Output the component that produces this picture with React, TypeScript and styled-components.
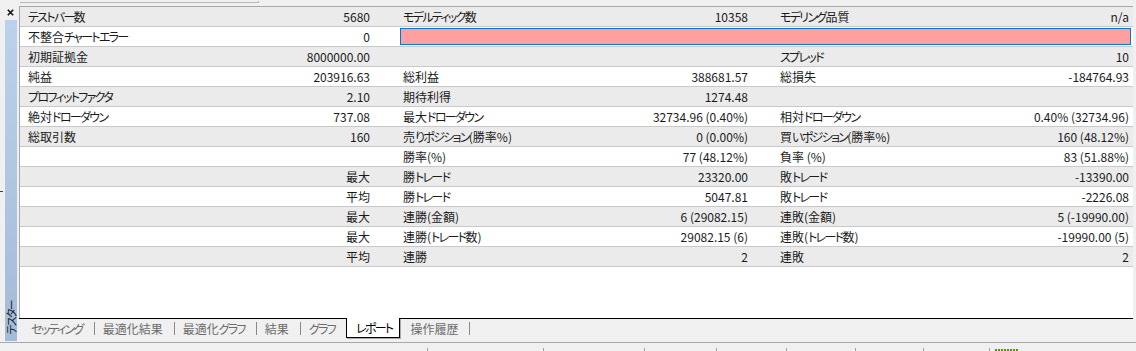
import { Fragment } from 'react';
import styled, { createGlobalStyle, css } from 'styled-components';

const GlobalStyle = createGlobalStyle`
  html, body {
    margin: 0;
    padding: 0;
    background: #f0f0f0;
  }
  body {
    font-family: "Noto Sans CJK JP", "Noto Sans", sans-serif;
    font-size: 12px;
    color: #1a1a1a;
  }
`;

const Window = styled.div`
  width: 1136px;
  height: 351px;
  display: flex;
  flex-direction: column;
  overflow: hidden;
  background: #f0f0f0;
  font-feature-settings: "palt";
`;

// kana in the reference font are much narrower than in Noto CJK
const Kana = styled.span`
  letter-spacing: -1.7px;
`;

const kanaRun = /([\u3040-\u30ff]+)/;

const Jp = ({ text }: { text: string }) => (
  <>
    {text.split(kanaRun).map((part, i) => (i % 2 ? <Kana key={i}>{part}</Kana> : part))}
  </>
);

const TopStrip = styled.div`
  height: 6px;
  display: flex;
  padding-left: 20px;
`;

const TopFragment = styled.div`
  width: 238px;
  height: 1px;
  margin-top: 1px;
  border-bottom: 1px solid #b8b8b8;
  border-right: 1px solid #b8b8b8;
`;

const Main = styled.div`
  height: 336px;
  display: flex;
`;

const Dock = styled.div`
  width: 19px;
  display: flex;
  flex-direction: column;
  align-items: flex-start;
  position: relative;
`;

const CloseButton = styled.div`
  margin: 3px 0 0 7px;
  width: 7px;
  height: 7px;
  display: flex;
`;

const DockBar = styled.div`
  margin: 4px 0 1px 5px;
  width: 12px;
  flex: 1;
  background: linear-gradient(#bcd2ea, #a2bbd8);
  display: flex;
  flex-direction: column;
  justify-content: flex-end;
  align-items: center;
`;

const DockTitle = styled.div`
  writing-mode: vertical-rl;
  text-orientation: sideways;
  transform: rotate(180deg);
  font-size: 11px;
  line-height: 12px;
  color: #1a1a1a;
  margin-bottom: 6px;
`;

const EdgeMark = styled.div`
  position: absolute;
  left: 0;
  top: 185px;
  width: 3px;
  height: 1px;
  background: #2040a0;
`;

const Panel = styled.div`
  flex: 1;
  margin-right: 3px;
  display: flex;
  flex-direction: column;
`;

const ReportArea = styled.div`
  flex: 1;
  background: #fff;
  border-top: 1px solid #a8a8a8;
  border-left: 1px solid #a8a8a8;
`;

const Row = styled.div<{ $alt: boolean }>`
  display: grid;
  grid-template-columns: 180px 198px 180px 197px 180px 178px;
  height: 19px;
  line-height: 19px;
  border-bottom: 1px solid #c9c9c9;
  background: ${p => (p.$alt ? '#ebebeb' : '#ffffff')};
`;

const Label = styled.div<{ $first?: boolean }>`
  padding-left: ${p => (p.$first ? 8 : 5)}px;
  white-space: nowrap;
  overflow: hidden;
`;

const Value = styled.div<{ $pad: number }>`
  padding-right: ${p => p.$pad}px;
  text-align: right;
  white-space: nowrap;
  overflow: hidden;
`;

const ErrorField = styled.div`
  grid-column: 3 / 7;
  margin: 1px 2px 1px 2px;
  height: 15px;
  background: #ffa0a0;
  border: 1px solid #0078d7;
`;

const TabBar = styled.div`
  height: 23px;
  border-top: 1px solid #000;
  display: flex;
  align-items: flex-start;
  padding-left: 4px;
`;

const Tab = styled.div<{ $active?: boolean; $afterActive?: boolean }>`
  height: 19px;
  line-height: 19px;
  padding: 0 11px 0 ${p => (p.$afterActive ? 10 : 8)}px;
  color: #6b6b6b;
  white-space: nowrap;
  ${p =>
    p.$active &&
    css`
      margin-top: -1px;
      padding: 0 7px 0 9px;
      background: #fff;
      color: #000;
      border: 1px solid #000;
      border-top: none;
      box-shadow: 1px 1px 0 #a8a8a8;
    `}
`;

const TabSep = styled.div`
  width: 1px;
  height: 13px;
  margin-top: 3px;
  background: #8a8a8a;
`;

const StatusBar = styled.div`
  height: 8px;
  border-top: 1px solid #a8a8a8;
  display: flex;
`;

const StatusCell = styled.div<{ $w?: number; $sep?: boolean }>`
  ${p => (p.$w ? `width: ${p.$w}px;` : 'flex: 1;')}
  position: relative;
  ${p =>
    p.$sep &&
    css`
      &::before {
        content: '';
        position: absolute;
        left: 0;
        top: 5px;
        width: 1px;
        height: 4px;
        background: #a0a0a0;
      }
    `}
`;

const Meter = styled.div`
  margin: 6px 0 0 6px;
  width: 23px;
  height: 2px;
  background: repeating-linear-gradient(90deg, #5f8f00 0 2px, transparent 2px 3px);
`;

type ReportRow = { cells: string[]; error?: boolean };

const rows: ReportRow[] = [
  { cells: ['テストバー数', '5680', 'モデルティック数', '10358', 'モデリング品質', 'n/a'] },
  { cells: ['不整合チャートエラー', '0'], error: true },
  { cells: ['初期証拠金', '8000000.00', '', '', 'スプレッド', '10'] },
  { cells: ['純益', '203916.63', '総利益', '388681.57', '総損失', '-184764.93'] },
  { cells: ['プロフィットファクタ', '2.10', '期待利得', '1274.48', '', ''] },
  { cells: ['絶対ドローダウン', '737.08', '最大ドローダウン', '32734.96 (0.40%)', '相対ドローダウン', '0.40% (32734.96)'] },
  { cells: ['総取引数', '160', '売りポジション(勝率%)', '0 (0.00%)', '買いポジション(勝率%)', '160 (48.12%)'] },
  { cells: ['', '', '勝率(%)', '77 (48.12%)', '負率 (%)', '83 (51.88%)'] },
  { cells: ['', '最大', '勝トレード', '23320.00', '敗トレード', '-13390.00'] },
  { cells: ['', '平均', '勝トレード', '5047.81', '敗トレード', '-2226.08'] },
  { cells: ['', '最大', '連勝(金額)', '6 (29082.15)', '連敗(金額)', '5 (-19990.00)'] },
  { cells: ['', '最大', '連勝(トレード数)', '29082.15 (6)', '連敗(トレード数)', '-19990.00 (5)'] },
  { cells: ['', '平均', '連勝', '2', '連敗', '2'] },
];

const valuePads = [28, 27, 4];

const tabs = ['セッティング', '最適化結果', '最適化グラフ', '結果', 'グラフ', 'レポート', '操作履歴'];
const activeTab = 5;

const statusWidths = [427, 116, 101, 72, 70, 69, 68, 66];

export default function App() {
  return (
    <>
      <GlobalStyle />
      <Window>
        <TopStrip>
          <TopFragment />
        </TopStrip>
        <Main>
          <Dock>
            <CloseButton>
              <svg width="7" height="7" viewBox="0 0 7 7">
                <path d="M0.8 0.8 L6.2 6.2 M6.2 0.8 L0.8 6.2" stroke="#111" strokeWidth="1.6" />
              </svg>
            </CloseButton>
            <DockBar>
              <DockTitle>
                <Jp text="テスター" />
              </DockTitle>
            </DockBar>
            <EdgeMark />
          </Dock>
          <Panel>
            <ReportArea>
              {rows.map((r, i) => (
                <Row key={i} $alt={i % 2 === 0}>
                  {[0, 1, 2].map(g => {
                    if (r.error && g > 0) return null;
                    return (
                      <Fragment key={g}>
                        <Label $first={g === 0}>
                          <Jp text={r.cells[g * 2]} />
                        </Label>
                        <Value $pad={valuePads[g]}>{r.cells[g * 2 + 1]}</Value>
                      </Fragment>
                    );
                  })}
                  {r.error && <ErrorField />}
                </Row>
              ))}
            </ReportArea>
            <TabBar>
              {tabs.map((t, i) => (
                <Fragment key={t}>
                  <Tab $active={i === activeTab} $afterActive={i === activeTab + 1}>
                    <Jp text={t} />
                  </Tab>
                  {i !== activeTab && i !== activeTab - 1 && <TabSep />}
                </Fragment>
              ))}
            </TabBar>
          </Panel>
        </Main>
        <StatusBar>
          {statusWidths.map((w, i) => (
            <StatusCell key={i} $w={w} $sep={i > 0} />
          ))}
          <StatusCell $sep>
            <Meter />
          </StatusCell>
        </StatusBar>
      </Window>
    </>
  );
}
